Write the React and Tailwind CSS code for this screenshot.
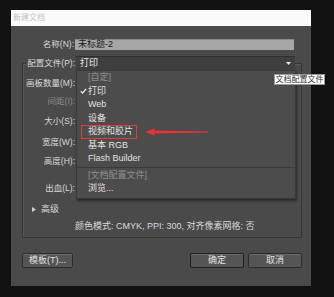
import React from "react";

const menuItems = [
  { text: "[自定]", dim: true },
  { text: "打印", checked: true },
  { text: "Web" },
  { text: "设备" },
  { text: "视频和胶片", boxed: true },
  { text: "基本 RGB" },
  { text: "Flash Builder" },
  { sep: true },
  { text: "[文档配置文件]", dim: true },
  { text: "浏览..." },
];

const groupRows = [
  { label: "画板数量(M):", mt: "mt-[6px]" },
  { label: "间距(I):", mt: "mt-[4px]", dim: true },
  { label: "大小(S):", mt: "mt-[6px]" },
  { label: "宽度(W):", mt: "mt-[7px]" },
  { label: "高度(H):", mt: "mt-[5px]" },
  { label: "出血(L):", mt: "mt-[13px]" },
];

function Check() {
  return (
    <svg width="7" height="6" viewBox="0 0 7 6" className="text-[#e6e6e6]">
      <path d="M0.8 3.2 L2.6 5 L6.2 0.8" fill="none" stroke="currentColor" strokeWidth="1.3" />
    </svg>
  );
}

export default function App() {
  return (
    <div className="w-[334px] h-[297px] bg-[#121212] pt-[10px] pl-[11px] overflow-hidden font-['Liberation_Sans','Noto_Sans_CJK_SC',sans-serif] text-[9px] leading-none">
      <div className="relative w-[300px] h-[276px] bg-[#4a4a4a] flex flex-col">
        {/* Title bar */}
        <div className="h-[16px] bg-[#fbfbfb] flex items-center pl-[2px] text-[8px] text-[#c2c2c2]">
          新建文档
        </div>

        {/* Name */}
        <div className="mt-[12px] h-[12px] flex items-center">
          <div className="w-[64px] pr-[1px] flex justify-end">
            <span className="shrink-0 whitespace-nowrap text-[8.5px] text-[#d8d8d8]">名称(N):</span>
          </div>
          <div className="w-[219px] h-[11px] bg-[#a6a6a6] border-t border-[#8a8a8a] flex items-center pl-[3px] text-[#161616]">
            未标题-2
          </div>
        </div>

        {/* Group box */}
        <div className="mt-[13px] ml-[11px] w-[280px] h-[175px] border border-[#363636] shadow-[inset_1px_1px_0_#575757] flex flex-col">
          {/* Profile row sits on the top border */}
          <div className="-mt-[8px] h-[14px] flex items-center">
            <div className="w-[53px] flex justify-end pr-[1px]">
              <span className="shrink-0 whitespace-nowrap bg-[#4a4a4a] pl-[1px] text-[8.5px] text-[#d8d8d8]">配置文件(P):</span>
            </div>
            <div className="w-[219px] h-[14px] bg-[#3f3f3f] border-t border-[#2f2f2f] flex items-center justify-between pl-[4px] pr-[4px] text-[#eeeeee]">
              <span>打印</span>
              <svg width="5" height="3" viewBox="0 0 5 3">
                <path d="M0 0 H5 L2.5 3 Z" fill="#e8e8e8" />
              </svg>
            </div>
          </div>

          {groupRows.map((r) => (
            <div key={r.label} className={`${r.mt} h-[14px] flex items-center`}>
              <div className="w-[53px] pr-[1px] flex justify-end">
                <span className={`shrink-0 whitespace-nowrap text-[8.5px] ${r.dim ? "text-[#8c8c8c]" : "text-[#d8d8d8]"}`}>
                  {r.label}
                </span>
              </div>
            </div>
          ))}

          {/* Advanced */}
          <div className="mt-[7px] h-[14px] flex items-center pl-[9px] text-[#d8d8d8]">
            <svg width="4" height="5" viewBox="0 0 4 5">
              <path d="M0 0 L4 2.5 L0 5 Z" fill="#cfcfcf" />
            </svg>
            <span className="ml-[5px]">高级</span>
          </div>

          {/* Color info */}
          <div className="mt-[3px] h-[14px] flex items-center pl-[52px] text-[#d8d8d8] whitespace-nowrap">
            颜色模式: CMYK, PPI: 300, 对齐像素网格: 否
          </div>
        </div>

        {/* Buttons */}
        <div className="mt-[15px] ml-[11px] w-[280px] flex justify-between">
          <button className="w-[51px] h-[15px] bg-[#555555] border border-[#2c2c2c] rounded-[2px] shadow-[inset_0_1px_0_#6a6a6a] text-[#e2e2e2]">
            模板(T)...
          </button>
          <div className="flex gap-[4px]">
            <button className="w-[54px] h-[15px] bg-[#555555] border border-[#1f1f1f] rounded-[2px] shadow-[inset_0_1px_0_#6a6a6a] text-[#e2e2e2]">
              确定
            </button>
            <button className="w-[54px] h-[15px] bg-[#555555] border border-[#2c2c2c] rounded-[2px] shadow-[inset_0_1px_0_#6a6a6a] text-[#e2e2e2]">
              取消
            </button>
          </div>
        </div>

        {/* Dropdown menu (open) */}
        <div className="absolute left-[65px] top-[60px] w-[220px] bg-[#4c4c4c] border border-[#393939] shadow-[1px_2px_2px_rgba(0,0,0,0.45)] flex flex-col pb-[2px]">
          {menuItems.map((m, i) =>
            m.sep ? (
              <div key={i} className="my-[1px] h-px bg-[#3a3a3a]" />
            ) : (
              <div key={i} className={`h-[13.5px] flex items-center ${m.dim ? "text-[#8e8e8e]" : "text-[#e2e2e2]"}`}>
                {m.boxed ? (
                  <span className="ml-[4px] h-[14px] flex items-center border-[1.5px] border-[#e23a3a] pl-[6px] pr-[3px]">
                    {m.text}
                  </span>
                ) : (
                  <>
                    <div className="w-[11px] pl-[3px] flex items-center">{m.checked && <Check />}</div>
                    <span>{m.text}</span>
                  </>
                )}
              </div>
            )
          )}
        </div>

        {/* Red annotation arrow */}
        <svg className="absolute left-[133px] top-[117px]" width="66" height="10" viewBox="0 0 66 10">
          <path d="M1 5 L11 1.2 L10 3.6 L64 4.6 L64 5.4 L10 6.4 L11 8.8 Z" fill="#ea3338" />
        </svg>

        {/* Tooltip */}
        <div className="absolute left-[263px] top-[64px] w-[51px] h-[11px] bg-white border border-[#9a9a9a] flex items-center justify-center text-[8px] text-[#333333] whitespace-nowrap">
          文档配置文件
        </div>
      </div>
    </div>
  );
}
